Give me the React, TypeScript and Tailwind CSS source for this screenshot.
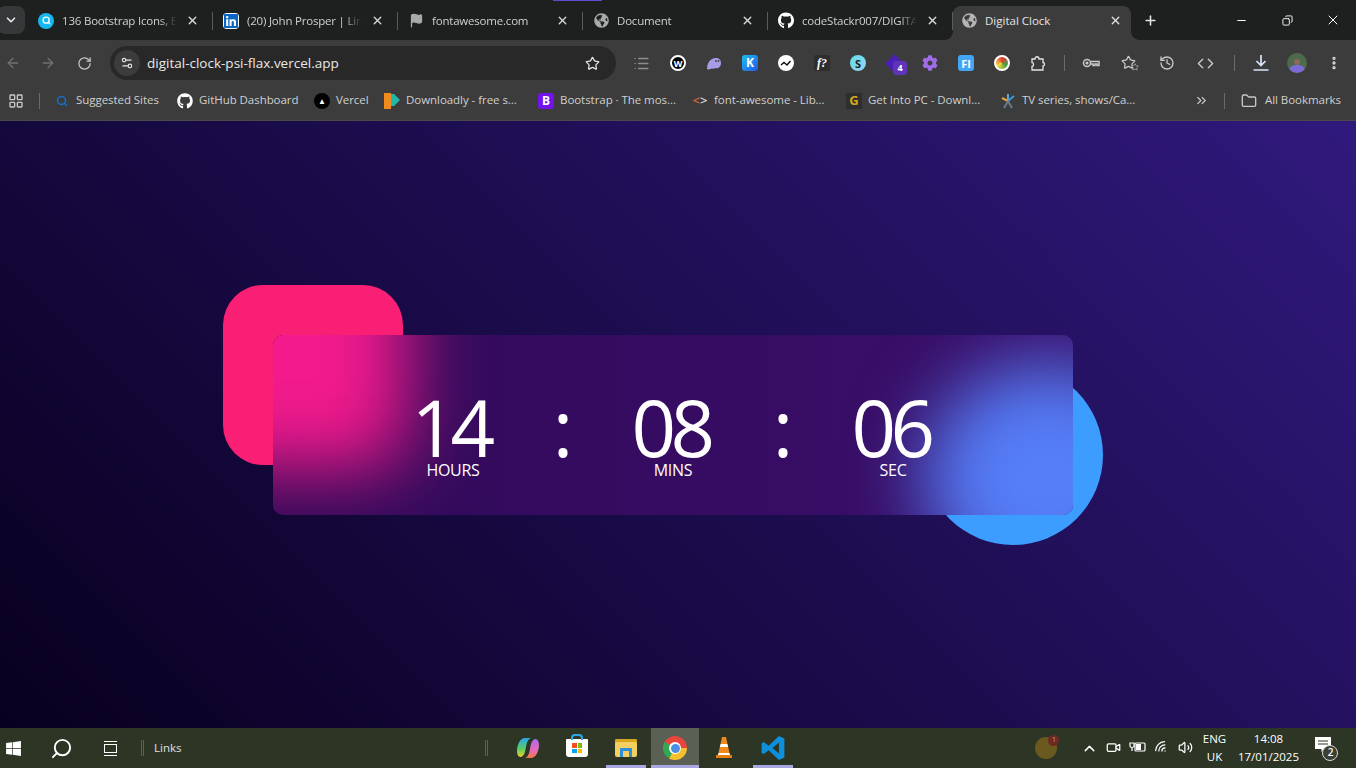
import { ArrowLeft, ArrowRight, RotateCw, Star, X, Plus, Minus, Copy, ChevronDown, ChevronUp, ChevronsRight, LayoutGrid, Folder, Search, EllipsisVertical, History, Code, List, Settings2, Flag, Video, Wifi, Volume2 } from 'lucide-react';
import { FaCog, FaGithub, FaGlobeAmericas, FaLinkedin, FaWindows } from 'react-icons/fa';

const font = 'font-["Open_Sans","Noto_Sans",sans-serif]';

interface Tab {
  title: string;
  icon: React.ReactNode;
}

const QIcon = () => (
  <span className="flex h-4 w-4 items-center justify-center rounded-full bg-[#14b8f0]">
    <Search size={9} strokeWidth={3.5} className="text-white" />
  </span>
);

const tabs: Tab[] = [
  { title: '136 Bootstrap Icons, E', icon: <QIcon /> },
  { title: '(20) John Prosper | Lin', icon: <FaLinkedin size={16} className="rounded-sm bg-white text-[#0a66c2]" /> },
  { title: 'fontawesome.com', icon: <Flag size={15} className="fill-[#a8a9aa] text-[#a8a9aa]" /> },
  { title: 'Document', icon: <FaGlobeAmericas size={15} className="text-[#a8a9aa]" /> },
  { title: 'codeStackr007/DIGITA', icon: <FaGithub size={17} className="text-white" /> },
];

const TabBar = () => (
  <div className="relative flex h-10 items-end bg-[#1e2020]">
    {/* group colour line above the fourth tab */}
    <span className="absolute left-[553px] top-0 h-px w-[49px] bg-[#5b4fd0]" />
    <div className="mb-[6px] ml-[-3px] flex h-7 w-7 items-center justify-center rounded-lg bg-[#363738]">
      <ChevronDown size={14} strokeWidth={3} className="text-[#e3e3e3]" />
    </div>
    <div className="ml-[3px] flex h-[34px]">
      {tabs.map((t) => (
        <div key={t.title} className="flex w-[185px] items-center pb-[5px] pl-[10px]">
          <span className="flex w-4 shrink-0 justify-center">{t.icon}</span>
          <span className="ml-2 w-[122px] overflow-hidden whitespace-nowrap text-[11.5px] tracking-[-0.2px] text-[#cfd0d0] [mask-image:linear-gradient(90deg,#000_80%,transparent_94%)]">{t.title}</span>
          <X size={13} strokeWidth={2.5} className="ml-auto text-[#d8d8d8]" />
          <span className="ml-[13px] h-[18px] w-px shrink-0 bg-[#5b5c5c]" />
        </div>
      ))}
      <div className="relative flex w-[178px] items-center rounded-t-lg bg-[#3c3c3c] pb-[5px] pl-[9px] pr-[9px]">
        <span className="absolute bottom-0 left-[-8px] h-2 w-2 bg-[radial-gradient(circle_at_0_0,transparent_7.5px,#3c3c3c_8px)]" />
        <span className="absolute bottom-0 right-[-8px] h-2 w-2 bg-[radial-gradient(circle_at_100%_0,transparent_7.5px,#3c3c3c_8px)]" />
        <FaGlobeAmericas size={15} className="shrink-0 text-[#b5b5b5]" />
        <span className="ml-2 text-[11.5px] text-[#e4e4e4]">Digital Clock</span>
        <X size={13} strokeWidth={2.5} className="ml-auto text-[#e3e3e3]" />
      </div>
      <div className="ml-[12px] flex items-center pb-[5px]">
        <Plus size={15} strokeWidth={2.5} className="text-[#e3e3e3]" />
      </div>
    </div>
    <div className="ml-auto flex h-10 items-center text-white">
      <span className="flex w-[46px] justify-center"><Minus size={13} /></span>
      <span className="flex w-[46px] justify-center"><Copy size={11} className="scale-x-[-1]" /></span>
      <span className="flex w-[46px] justify-center"><X size={16} strokeWidth={1.5} /></span>
    </div>
  </div>
);

const Ext = ({ className, children }: { className?: string; children?: React.ReactNode }) => (
  <span className={`flex h-4 w-4 items-center justify-center overflow-hidden font-bold leading-none ${className ?? ''}`}>{children}</span>
);

const Toolbar = () => (
  <div className="flex h-[44px] items-center bg-[#3c3c3c] pt-[2px]">
    <ArrowLeft size={16} className="ml-[5px] text-[#6f7070]" />
    <ArrowRight size={16} className="ml-[19px] text-[#6f7070]" />
    <RotateCw size={15} className="ml-[21px] text-[#c8c8c8]" />
    <div className="ml-[18px] flex h-[34px] w-[506px] items-center rounded-full bg-[#282828]">
      <span className="ml-[4px] flex h-[26px] w-[26px] items-center justify-center rounded-full bg-[#3c3c3c]">
        <Settings2 size={14} className="text-[#e3e3e3]" />
      </span>
      <span className="ml-[7px] text-[13.5px] text-[#e8e8e8]">digital-clock-psi-flax.vercel.app</span>
      <Star size={15} className="ml-auto mr-[16px] text-[#e3e3e3]" />
    </div>
    <div className="ml-[17px] flex items-center gap-5">
      <List size={17} className="text-[#8d8e8e]" />
      <Ext className="rounded-full border-2 border-white bg-black text-[9px] text-white">W</Ext>
      <svg width="16" height="16" viewBox="0 0 16 16">
        <path d="M1 14c0-6 3-11 9-11 3 0 5 2 5 5 0 4-3 6-6 5-1 1.500-2 0-3 .5S2.500 15 1 14z" fill="#a99be8" />
        <circle cx="10" cy="6" r=".9" fill="#3c3c3c" />
        <circle cx="12.500" cy="6" r=".9" fill="#3c3c3c" />
      </svg>
      <Ext className="rounded-[3px] bg-[linear-gradient(135deg,#1cc0f0,#2456e8)] text-[12px] text-white">K</Ext>
      <Ext className="rounded-full bg-white">
        <svg width="14" height="14" viewBox="0 0 14 14" fill="none" stroke="#111" strokeWidth="1.500">
          <path d="M2 9l3-2.500L8 9l3.500-4" />
        </svg>
      </Ext>
      <Ext className="rounded-[2px] bg-[#2e2e2e] font-['Liberation_Serif',serif] text-[12px] italic text-white">f?</Ext>
      <Ext className="rounded-full bg-[linear-gradient(135deg,#5fe0e8,#9ad0f5)] text-[11px] text-[#1e2020]">S</Ext>
      <span className="relative flex h-4 w-4 items-center justify-center">
        <span className="h-[13px] w-[13px] rotate-45 bg-[#4a1fb8]" />
        <span className="absolute left-[7px] top-[6px] flex h-[14px] w-[14px] items-center justify-center rounded-[3px] bg-[#5e35b8] text-[9px] font-bold text-white">4</span>
      </span>
      <FaCog size={16} className="text-[#a06ce8]" />
      <Ext className="rounded-[3px] bg-[#42a5f5] text-[11px] text-white">FI</Ext>
      <Ext className="rounded-full border-2 border-white bg-[conic-gradient(#e53935,#43a047,#fdd835,#e53935)]" />
      <svg width="16" height="16" viewBox="0 0 16 16" fill="none" stroke="#e3e3e3" strokeWidth="1.300">
        <path d="M2 4h3c0-3 4-3 4 0h4v3.500c2 0 2 3.500 0 3.500v4H2v-3.500c2 0 2-4 0-4z" />
      </svg>
    </div>
    <span className="ml-[18px] h-[16px] w-px bg-[#6a6b6b]" />
    <svg width="18" height="16" viewBox="0 0 18 16" fill="none" stroke="#c8c8c8" strokeWidth="1.500" className="ml-[17px]">
      <circle cx="5" cy="8" r="3.500" />
      <circle cx="5" cy="8" r=".8" fill="#c8c8c8" />
      <path d="M8.500 6.500H17v4h-2V9h-2v1.500h-2V9H8.500" />
    </svg>
    <span className="relative ml-[21px] flex h-4 w-4">
      <Star size={15} className="text-[#c8c8c8]" />
      <Star size={8} className="absolute bottom-0 right-[-2px] fill-[#3c3c3c] text-[#c8c8c8]" />
    </span>
    <History size={16} className="ml-[22px] text-[#c8c8c8]" />
    <Code size={17} className="ml-[22px] text-[#c8c8c8]" />
    <span className="ml-[20px] h-[16px] w-px bg-[#6a6b6b]" />
    <svg width="18" height="18" viewBox="0 0 18 18" fill="none" stroke="#d5e6fb" strokeWidth="1.700" className="ml-[17px]">
      <path d="M9 1v10M4.500 7 9 11.500 13.500 7M1.500 16h15" />
    </svg>
    <span className="ml-[17px] flex h-5 w-5 flex-col items-center justify-end overflow-hidden rounded-full bg-[#4d6a4a]">
      <span className="h-[6px] w-[6px] rounded-full bg-[#8a6a58]" />
      <span className="h-[8px] w-[16px] rounded-t-md bg-[#7c6bd4]" />
    </span>
    <EllipsisVertical size={16} strokeWidth={3} className="ml-[19px] text-[#d8d8d8]" />
  </div>
);

interface Bookmark {
  title: string;
  icon: React.ReactNode;
  slot: string;
}

const bookmarks: Bookmark[] = [
  { title: 'Suggested Sites', icon: <Search size={12} strokeWidth={3} className="mr-[2px] text-[#1670c8]" />, slot: 'w-[121px]' },
  { title: 'GitHub Dashboard', icon: <FaGithub size={16} className="text-white" />, slot: 'w-[137px]' },
  { title: 'Vercel', icon: <span className="flex h-4 w-4 items-center justify-center rounded-full bg-black text-[8px] text-white">▲</span>, slot: 'w-[70px]' },
  {
    title: 'Downloadly - free s...',
    icon: (
      <svg width="16" height="16" viewBox="0 0 16 16" className="shrink-0">
        <path d="M0 0h7v16H0z" fill="#f08a1d" />
        <path d="M7 1h3l6 6-6 6H7z" fill="#24b8a8" />
      </svg>
    ),
    slot: 'w-[154px]',
  },
  { title: 'Bootstrap · The mos...', icon: <span className="flex h-4 w-4 items-center justify-center rounded-[3px] bg-[#7213ea] text-[12px] font-bold text-white">B</span>, slot: 'w-[154px]' },
  { title: 'font-awesome - Lib...', icon: <span className="flex w-4 justify-center text-[13px] font-semibold leading-none"><span className="text-[#e0653a]">&lt;</span><span className="text-[#d8d8d8]">&gt;</span></span>, slot: 'w-[154px]' },
  { title: 'Get Into PC - Downl...', icon: <span className="flex h-4 w-4 items-center justify-center bg-[#2e2e2e] text-[13px] font-bold text-[#d9a520]">G</span>, slot: 'w-[154px]' },
  {
    title: 'TV series, shows/Ca...',
    icon: (
      <svg width="16" height="16" viewBox="0 0 16 16" fill="none" strokeWidth="2" className="shrink-0">
        <path d="M8 1v7" stroke="#5aa8e0" />
        <path d="M2 5l6 3" stroke="#e8a23a" />
        <path d="M14 3 8 8" stroke="#3f9ad8" />
        <path d="M8 8l-4 7M8 8l4 7" stroke="#6a7a88" />
      </svg>
    ),
    slot: 'w-[135px]',
  },
];

const BookmarksBar = () => (
  <div className="flex h-[37px] items-center border-b border-[#4a4a4a] bg-[#3c3c3c] pb-[3px] text-[11.5px] tracking-[-0.05px] text-[#d0d0d0]">
    <LayoutGrid size={16} className="ml-[8px] text-[#c8c8c8]" />
    <span className="ml-[15px] mr-[16px] h-[16px] w-px bg-[#6a6b6b]" />
    {bookmarks.map((b) => (
      <div key={b.title} className={`${b.slot} flex items-center gap-[6px] whitespace-nowrap`}>
        {b.icon}
        <span className="mt-[-2px]">{b.title}</span>
      </div>
    ))}
    <ChevronsRight size={15} className="ml-[59px] text-[#c8c8c8]" />
    <span className="ml-[15px] h-[16px] w-px bg-[#6a6b6b]" />
    <Folder size={16} className="ml-[16px] text-[#c8c8c8]" />
    <span className="ml-[8px] mt-[-2px]">All Bookmarks</span>
  </div>
);

const Unit = ({ value, label }: { value: string; label: string }) => (
  <div className="flex w-[110px] flex-col items-center">
    <span className="h-[72px] pr-[5px] text-[78px] font-[375] leading-[80px] tracking-[-5.5px]">{value}</span>
    <span className="text-base leading-[22px] tracking-[-0.3px]">{label}</span>
  </div>
);

const Colon = () => <span className="h-[94px] w-[110px] text-center text-[78px] leading-[80px]">:</span>;

const Clock = () => (
  <main className="flex h-[607px] items-center justify-center bg-[linear-gradient(45deg,#08001f,#30197d)] pr-[10px]">
    <div className="relative">
      <div className="absolute left-[-50px] top-[-50px] h-[180px] w-[180px] rounded-[40px] bg-[#f91f75]" />
      <div className="absolute bottom-[-30px] right-[-30px] h-[180px] w-[180px] rounded-full bg-[#3c9dff]" />
      {/* frosted card: the blurred shapes sit clipped inside it */}
      <div className="relative flex h-[180px] w-[800px] items-center justify-center overflow-hidden rounded-[10px] bg-[linear-gradient(90deg,#300a58,#360c62_50%,#3a0f6a)] pt-[18px] text-white">
        <div className="absolute left-[-130px] top-[-130px] h-[265px] w-[265px] rounded-[40px] bg-[#f21a8c] blur-[38px]" />
        <div className="absolute left-[650px] top-[28px] h-[230px] w-[250px] rounded-[50%] bg-[#557ef8] blur-[38px]" />
        <div className="relative flex items-start">
          <Unit value="14" label="HOURS" />
          <Colon />
          <Unit value="08" label="MINS" />
          <Colon />
          <Unit value="06" label="SEC" />
        </div>
      </div>
    </div>
  </main>
);

const Slot = ({ line, active, children }: { line?: boolean; active?: boolean; children: React.ReactNode }) => (
  <span className={`relative flex w-12 items-center justify-center ${active ? 'bg-[#5b6054]' : ''}`}>
    {children}
    {line && <span className={`absolute bottom-0 h-[3px] bg-[#a9a7e0] ${active ? 'inset-x-0' : 'inset-x-1'}`} />}
  </span>
);

const Taskbar = () => (
  <footer className="flex h-10 items-center bg-[#2d3625] text-white">
    <FaWindows size={17} className="ml-[5px]" />
    <Search size={23} strokeWidth={2} className="ml-[28px] scale-x-[-1]" />
    <span className="ml-[29px] flex h-[15px] w-[17px] flex-col justify-between border-x-2 border-transparent">
      <span className="h-px bg-white" />
      <span className="h-[9px] border border-white" />
      <span className="h-px bg-white" />
    </span>
    <span className="ml-[22px] h-[16px] w-[3px] border-x border-[#5b6253]" />
    <span className="ml-[10px] text-[11.5px] text-[#e0e0e0]">Links</span>
    <span className="ml-[304px] h-[16px] w-[3px] border-x border-[#5b6253]" />
    <div className="ml-[16px] flex h-10 items-stretch gap-px">
      <Slot>
        <svg width="24" height="24" viewBox="0 0 24 24">
          <defs>
            <linearGradient id="cpA" x1="0" y1="0" x2="0" y2="1">
              <stop offset="0" stopColor="#2aa8f0" />
              <stop offset=".6" stopColor="#5fd05a" />
              <stop offset="1" stopColor="#f5c93a" />
            </linearGradient>
            <linearGradient id="cpB" x1="0" y1="0" x2="0" y2="1">
              <stop offset="0" stopColor="#a86cf0" />
              <stop offset=".6" stopColor="#e86ab8" />
              <stop offset="1" stopColor="#f5793a" />
            </linearGradient>
          </defs>
          <path d="M9 2h6c-3 1-4 4-5 9-1 6-2 9-5 10-3 0-4-3-4-6 0-6 3-13 8-13z" fill="url(#cpA)" />
          <path d="M15 22H9c3-1 4-4 5-9 1-6 2-9 5-10 3 0 4 3 4 6 0 6-3 13-8 13z" fill="url(#cpB)" />
        </svg>
      </Slot>
      <Slot>
        <span className="relative flex h-[18px] w-[22px] items-center justify-center rounded-b-[3px] rounded-t-[1px] bg-white">
          <span className="absolute top-[-5px] h-[6px] w-[12px] rounded-t-[4px] border-2 border-b-0 border-[#2aa8e0]" />
          <span className="grid h-[10px] w-[10px] grid-cols-2 gap-px">
            <i className="bg-[#f25022]" /><i className="bg-[#7fba00]" /><i className="bg-[#00a4ef]" /><i className="bg-[#ffb900]" />
          </span>
        </span>
      </Slot>
      <Slot line>
        <span className="flex h-[18px] w-[22px] items-end justify-center rounded-[2px] bg-[#f4d060] shadow-[inset_0_3px_0_#d9a520]">
          <span className="h-[9px] w-[12px] rounded-t-[1px] border-[3px] border-b-0 border-[#2f8fd8]" />
        </span>
      </Slot>
      <Slot line active>
        <span className="flex h-6 w-6 items-center justify-center rounded-full bg-[conic-gradient(#e8453c_0deg_90deg,#f5c02e_90deg_210deg,#34a853_210deg_300deg,#e8453c_300deg)]">
          <span className="flex h-3 w-3 items-center justify-center rounded-full bg-white">
            <span className="h-[9px] w-[9px] rounded-full bg-[#4a90e2]" />
          </span>
        </span>
      </Slot>
      <Slot>
        <svg width="18" height="24" viewBox="0 0 18 24">
          <path d="M7 1h4l1.500 7h-7zM4.800 11h8.400l1.300 6H3.500z" fill="#f08a1d" />
          <path d="M5.500 8h7l.7 3H4.800zM3.500 17h11l.6 2H2.900z" fill="#fff" />
          <path d="M1 19h16v3H1z" fill="#e67e10" />
        </svg>
      </Slot>
      <Slot line>
        <svg width="26" height="26" viewBox="0 0 24 24">
          <path d="M17.500 1 8 10 3.500 6.500 1.500 7.500v9l2 1L8 14l9.500 9 5-2.200V3.200zM17.500 7v10l-6-5z" fill="#0e8fdc" />
        </svg>
      </Slot>
    </div>
    <div className="relative ml-[238px] h-[22px] w-[22px] rounded-full bg-[#6b5a20]">
      <span className="absolute right-[-2px] top-[-2px] flex h-[11px] w-[11px] items-center justify-center rounded-full bg-[#6e2a22] text-[7px] text-[#c09a90]">1</span>
    </div>
    <div className="ml-[20px] flex">
      <span className="flex w-6 justify-center"><ChevronUp size={17} /></span>
      <span className="flex w-6 justify-center"><Video size={15} /></span>
      <span className="flex w-6 justify-center">
        <svg width="17" height="14" viewBox="0 0 17 14" fill="none" stroke="#fff" strokeWidth="1.200">
          <path d="M1 3v3c0 1 1 1.500 2 1.500S5 7 5 6V3zM3 7.500V11" />
          <rect x="6" y="3" width="10" height="8" rx="1" />
          <rect x="7" y="4" width="5" height="6" fill="#fff" stroke="none" />
        </svg>
      </span>
      <span className="flex w-6 justify-center"><Wifi size={15} className="-rotate-45" /></span>
      <span className="flex w-6 justify-center"><Volume2 size={15} /></span>
    </div>
    <div className="flex w-[34px] flex-col items-center text-[11.5px] leading-[18px]">
      <span>ENG</span>
      <span>UK</span>
    </div>
    <div className="ml-[3px] flex w-[68px] flex-col items-center text-[11.5px] leading-[18px]">
      <span>14:08</span>
      <span>17/01/2025</span>
    </div>
    <div className="relative ml-[13px] mt-[-7px]">
      <svg width="16" height="16" viewBox="0 0 16 16" className="block">
        <path d="M0 0h16v12H9l-2.500 3V12H0z" fill="#fff" />
        <path d="M3 4h10M3 7h10" stroke="#2d3625" />
      </svg>
      <span className="absolute left-[7px] top-[8px] flex h-[16px] w-[16px] items-center justify-center rounded-full border border-[#d8d8d8] bg-[#3a4033] text-[10px] font-semibold">2</span>
    </div>
  </footer>
);

export default function App() {
  return (
    <div className={`h-[768px] w-[1356px] overflow-hidden ${font}`}>
      <TabBar />
      <Toolbar />
      <BookmarksBar />
      <Clock />
      <Taskbar />
    </div>
  );
}
